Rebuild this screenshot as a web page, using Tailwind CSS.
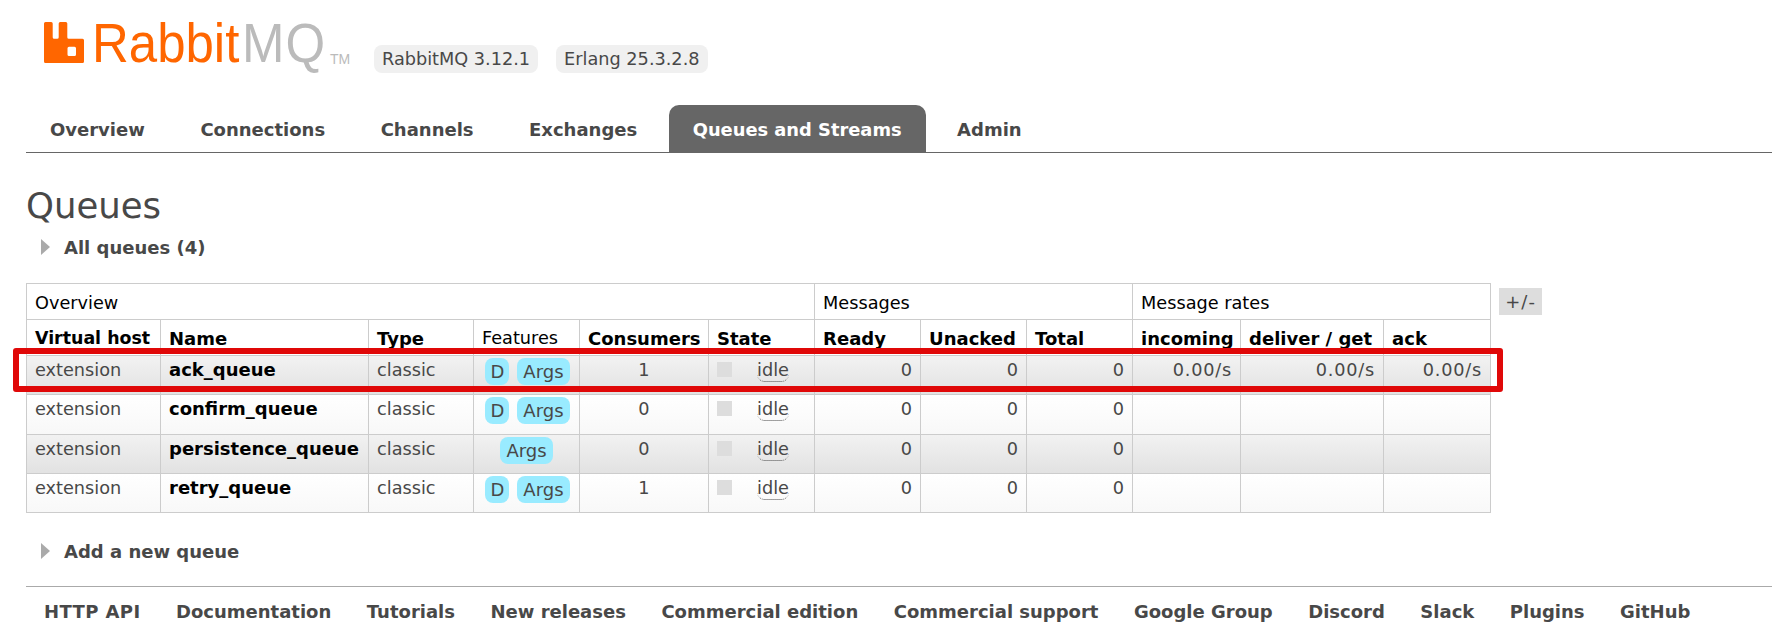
<!DOCTYPE html>
<html lang="en">
<head>
<meta charset="utf-8">
<title>RabbitMQ Management</title>
<script src="https://cdn.jsdelivr.net/npm/@tailwindcss/browser@4"></script>
</head>
<body class="bg-white font-['DejaVu_Sans',sans-serif] text-[17.7px] text-[#484848] overflow-hidden">
<div class="relative w-[1772px] h-[638px]">
  <!-- Header -->
  <header class="flex h-[105px] pl-[44px] pt-[22px]">
    <svg class="w-[40px] h-[41px] shrink-0" viewBox="0 0 40 41" fill="#ff6600" aria-hidden="true">
      <path fill-rule="evenodd" d="M1.5 0H7.2A1.5 1.5 0 0 1 8.7 1.5V15.2A1.5 1.5 0 0 0 10.2 16.7H13.2A1.5 1.5 0 0 0 14.7 15.2V1.5A1.5 1.5 0 0 1 16.2 0H21.8A1.5 1.5 0 0 1 23.3 1.5V15.2A1.5 1.5 0 0 0 24.8 16.7H38.5A1.5 1.5 0 0 1 40 18.2V39.5A1.5 1.5 0 0 1 38.5 41H1.5A1.5 1.5 0 0 1 0 39.5V1.5A1.5 1.5 0 0 1 1.5 0ZM25 24.7A1.5 1.5 0 0 0 23.5 26.2V32.5A1.5 1.5 0 0 0 25 34H30.5A1.5 1.5 0 0 0 32 32.5V26.2A1.5 1.5 0 0 0 30.5 24.7Z"/>
    </svg>
    <div class="ml-[8px] w-[238px] h-[41px] font-['Liberation_Sans',sans-serif] text-[56px] leading-[41px] whitespace-nowrap">
      <span class="inline-block origin-left scale-x-[0.91]"><span class="text-[#ff6600]">Rabbit</span><span class="text-[#bbbbbb] ml-[3px] tracking-[1px]">MQ</span></span>
    </div>
    <span class="mt-[31px] h-[12px] font-['Liberation_Sans',sans-serif] text-[14px] leading-[12px] text-[#bbbbbb] w-[20px]">TM</span>
    <span class="ml-[24px] mt-[23px] h-[28px] px-[8px] leading-[28px] bg-[#f0f0f0] rounded-[8px] whitespace-nowrap">RabbitMQ 3.12.1</span>
    <span class="ml-[18px] mt-[23px] h-[28px] px-[8px] leading-[28px] bg-[#f0f0f0] rounded-[8px] whitespace-nowrap">Erlang 25.3.2.8</span>
  </header>

  <!-- Tabs -->
  <nav class="ml-[26px] h-[48px] border-b border-[#666666]">
    <ul class="flex gap-[7.5px] font-bold text-[18px]">
      <li class="h-[47px] px-[24px] leading-[50px]">Overview</li>
      <li class="h-[47px] px-[24px] leading-[50px]">Connections</li>
      <li class="h-[47px] px-[24px] leading-[50px]">Channels</li>
      <li class="h-[47px] px-[24px] leading-[50px]">Exchanges</li>
      <li class="h-[47px] px-[24px] leading-[50px] bg-[#666666] text-white text-[17.85px] rounded-t-[10px]">Queues and Streams</li>
      <li class="h-[47px] px-[24px] leading-[50px]">Admin</li>
    </ul>
  </nav>

  <!-- Main -->
  <main class="ml-[26px]">
    <h1 class="mt-[32px] text-[35.5px] leading-[42px] font-normal">Queues</h1>
    <div class="flex items-center mt-[10px] ml-[15px] h-[20px] font-bold text-[18px]">
      <span class="w-0 h-0 border-y-[8px] border-y-transparent border-l-[9px] border-l-[#aaaaaa]"></span>
      <span class="ml-[14px]">All queues (4)</span>
    </div>

    <div class="flex mt-[26px] items-start">
      <table class="table-fixed w-[1464px] border-collapse">
        <colgroup>
          <col class="w-[134px]"><col class="w-[208px]"><col class="w-[105px]"><col class="w-[106px]"><col class="w-[129px]"><col class="w-[106px]"><col class="w-[106px]"><col class="w-[106px]"><col class="w-[106px]"><col class="w-[108px]"><col class="w-[143px]"><col class="w-[107px]">
        </colgroup>
        <thead class="text-black">
          <tr class="h-[36px]">
            <th colspan="6" class="border border-[#cccccc] px-[8px] pt-[3px] text-left font-normal">Overview</th>
            <th colspan="3" class="border border-[#cccccc] px-[8px] pt-[3px] text-left font-normal">Messages</th>
            <th colspan="3" class="border border-[#cccccc] px-[8px] pt-[3px] text-left font-normal">Message rates</th>
          </tr>
          <tr class="h-[36px] text-[18px] leading-[27px]">
            <th class="border-x border-[#cccccc] px-[8px] pt-[2px] text-left font-bold whitespace-nowrap text-[17.4px]">Virtual host</th>
            <th class="border-x border-[#cccccc] px-[8px] pt-[2px] text-left font-bold">Name</th>
            <th class="border-x border-[#cccccc] px-[8px] pt-[2px] text-left font-bold">Type</th>
            <th class="border-x border-[#cccccc] px-[8px] pt-[2px] text-left font-normal text-[17.7px]">Features</th>
            <th class="border-x border-[#cccccc] px-[8px] pt-[2px] text-left font-bold">Consumers</th>
            <th class="border-x border-[#cccccc] px-[8px] pt-[2px] text-left font-bold">State</th>
            <th class="border-x border-[#cccccc] px-[8px] pt-[2px] text-left font-bold">Ready</th>
            <th class="border-x border-[#cccccc] px-[8px] pt-[2px] text-left font-bold">Unacked</th>
            <th class="border-x border-[#cccccc] px-[8px] pt-[2px] text-left font-bold">Total</th>
            <th class="border-x border-[#cccccc] px-[8px] pt-[2px] text-left font-bold">incoming</th>
            <th class="border-x border-[#cccccc] px-[8px] pt-[2px] text-left font-bold whitespace-nowrap">deliver / get</th>
            <th class="border-x border-[#cccccc] px-[8px] pt-[2px] text-left font-bold">ack</th>
          </tr>
        </thead>
        <tbody>
          <tr class="h-[39.25px] bg-linear-to-b from-[#f2f2f2] to-[#e2e2e2]">
            <td class="border border-[#cccccc] px-[8px] pt-[1px] align-top">extension</td>
            <td class="border border-[#cccccc] px-[8px] align-top font-bold text-black text-[18px]">ack_queue</td>
            <td class="border border-[#cccccc] px-[8px] pt-[1px] align-top">classic</td>
            <td class="border border-[#cccccc] pt-[2px] pl-[2px] align-top"><div class="flex justify-center gap-[8px] text-[18px]"><span class="h-[27px] px-[5px] leading-[28px] bg-[#99ebff] rounded-[8px]">D</span><span class="h-[27px] px-[6px] leading-[28px] bg-[#99ebff] rounded-[8px]">Args</span></div></td>
            <td class="border border-[#cccccc] px-[8px] pt-[1px] align-top text-center">1</td>
            <td class="border border-[#cccccc] px-[8px] pt-[6px] align-top"><div class="flex items-start"><span class="w-[15px] h-[15px] bg-[#dddddd]"></span><span class="ml-[25px] -mt-[5px] h-[25px] rounded-b-[8px] border-b border-dotted border-[#484848]">idle</span></div></td>
            <td class="border border-[#cccccc] px-[8px] pt-[1px] align-top text-right">0</td>
            <td class="border border-[#cccccc] px-[8px] pt-[1px] align-top text-right">0</td>
            <td class="border border-[#cccccc] px-[8px] pt-[1px] align-top text-right">0</td>
            <td class="border border-[#cccccc] px-[8px] pt-[1px] align-top text-right tracking-[0.8px]">0.00/s</td>
            <td class="border border-[#cccccc] px-[8px] pt-[1px] align-top text-right tracking-[0.8px]">0.00/s</td>
            <td class="border border-[#cccccc] px-[8px] pt-[1px] align-top text-right tracking-[0.8px]">0.00/s</td>
          </tr>
          <tr class="h-[39.25px] bg-linear-to-b from-[#ffffff] to-[#f8f8f8]">
            <td class="border border-[#cccccc] px-[8px] pt-[1px] align-top">extension</td>
            <td class="border border-[#cccccc] px-[8px] align-top font-bold text-black text-[18px]">confirm_queue</td>
            <td class="border border-[#cccccc] px-[8px] pt-[1px] align-top">classic</td>
            <td class="border border-[#cccccc] pt-[2px] pl-[2px] align-top"><div class="flex justify-center gap-[8px] text-[18px]"><span class="h-[27px] px-[5px] leading-[28px] bg-[#99ebff] rounded-[8px]">D</span><span class="h-[27px] px-[6px] leading-[28px] bg-[#99ebff] rounded-[8px]">Args</span></div></td>
            <td class="border border-[#cccccc] px-[8px] pt-[1px] align-top text-center">0</td>
            <td class="border border-[#cccccc] px-[8px] pt-[6px] align-top"><div class="flex items-start"><span class="w-[15px] h-[15px] bg-[#dddddd]"></span><span class="ml-[25px] -mt-[5px] h-[25px] rounded-b-[8px] border-b border-dotted border-[#484848]">idle</span></div></td>
            <td class="border border-[#cccccc] px-[8px] pt-[1px] align-top text-right">0</td>
            <td class="border border-[#cccccc] px-[8px] pt-[1px] align-top text-right">0</td>
            <td class="border border-[#cccccc] px-[8px] pt-[1px] align-top text-right">0</td>
            <td class="border border-[#cccccc]"></td>
            <td class="border border-[#cccccc]"></td>
            <td class="border border-[#cccccc]"></td>
          </tr>
          <tr class="h-[39.25px] bg-linear-to-b from-[#f2f2f2] to-[#e2e2e2]">
            <td class="border border-[#cccccc] px-[8px] pt-[1px] align-top">extension</td>
            <td class="border border-[#cccccc] px-[8px] align-top font-bold text-black whitespace-nowrap text-[18px]">persistence_queue</td>
            <td class="border border-[#cccccc] px-[8px] pt-[1px] align-top">classic</td>
            <td class="border border-[#cccccc] pt-[2px] align-top"><div class="flex justify-center text-[18px]"><span class="h-[27px] px-[6px] leading-[28px] bg-[#99ebff] rounded-[8px]">Args</span></div></td>
            <td class="border border-[#cccccc] px-[8px] pt-[1px] align-top text-center">0</td>
            <td class="border border-[#cccccc] px-[8px] pt-[6px] align-top"><div class="flex items-start"><span class="w-[15px] h-[15px] bg-[#dddddd]"></span><span class="ml-[25px] -mt-[5px] h-[25px] rounded-b-[8px] border-b border-dotted border-[#484848]">idle</span></div></td>
            <td class="border border-[#cccccc] px-[8px] pt-[1px] align-top text-right">0</td>
            <td class="border border-[#cccccc] px-[8px] pt-[1px] align-top text-right">0</td>
            <td class="border border-[#cccccc] px-[8px] pt-[1px] align-top text-right">0</td>
            <td class="border border-[#cccccc]"></td>
            <td class="border border-[#cccccc]"></td>
            <td class="border border-[#cccccc]"></td>
          </tr>
          <tr class="h-[39.25px] bg-linear-to-b from-[#ffffff] to-[#f8f8f8]">
            <td class="border border-[#cccccc] px-[8px] pt-[1px] align-top">extension</td>
            <td class="border border-[#cccccc] px-[8px] align-top font-bold text-black text-[18px]">retry_queue</td>
            <td class="border border-[#cccccc] px-[8px] pt-[1px] align-top">classic</td>
            <td class="border border-[#cccccc] pt-[2px] pl-[2px] align-top"><div class="flex justify-center gap-[8px] text-[18px]"><span class="h-[27px] px-[5px] leading-[28px] bg-[#99ebff] rounded-[8px]">D</span><span class="h-[27px] px-[6px] leading-[28px] bg-[#99ebff] rounded-[8px]">Args</span></div></td>
            <td class="border border-[#cccccc] px-[8px] pt-[1px] align-top text-center">1</td>
            <td class="border border-[#cccccc] px-[8px] pt-[6px] align-top"><div class="flex items-start"><span class="w-[15px] h-[15px] bg-[#dddddd]"></span><span class="ml-[25px] -mt-[5px] h-[25px] rounded-b-[8px] border-b border-dotted border-[#484848]">idle</span></div></td>
            <td class="border border-[#cccccc] px-[8px] pt-[1px] align-top text-right">0</td>
            <td class="border border-[#cccccc] px-[8px] pt-[1px] align-top text-right">0</td>
            <td class="border border-[#cccccc] px-[8px] pt-[1px] align-top text-right">0</td>
            <td class="border border-[#cccccc]"></td>
            <td class="border border-[#cccccc]"></td>
            <td class="border border-[#cccccc]"></td>
          </tr>
        </tbody>
      </table>
      <span class="ml-[8px] mt-[5px] w-[43px] h-[27px] leading-[27px] text-center bg-[#dddddd] text-[18px] tracking-[1px]">+/-</span>
    </div>

    <div class="flex items-center mt-[28px] ml-[15px] h-[20px] font-bold text-[18px]">
      <span class="w-0 h-0 border-y-[8px] border-y-transparent border-l-[9px] border-l-[#aaaaaa]"></span>
      <span class="ml-[14px]">Add a new queue</span>
    </div>
  </main>

  <!-- Footer -->
  <footer class="ml-[26px] mt-[25px] border-t border-[#aaaaaa] pt-[11px] pl-[18px] flex gap-[35.5px] font-bold text-[18px]">
    <span class="tracking-[0.4px]">HTTP API</span><span>Documentation</span><span>Tutorials</span><span>New releases</span><span>Commercial edition</span><span>Commercial support</span><span>Google Group</span><span>Discord</span><span>Slack</span><span>Plugins</span><span>GitHub</span>
  </footer>

  <!-- Red annotation rectangle -->
  <div class="absolute left-[13px] top-[348px] w-[1490px] h-[44px] border-[6px] border-[#e00808] rounded-[3px] pointer-events-none"></div>
</div>
</body>
</html>
